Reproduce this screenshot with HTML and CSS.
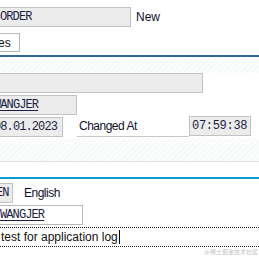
FILE: index.html
```html
<!DOCTYPE html>
<html>
<head>
    <meta charset="UTF-8">
    <title>Log Header</title>
    <link rel="stylesheet" href="styles.css">
</head>
<body>
    <div class="screen">
        <div class="row r1">
            <span class="fld gray f-order">ORDER</span>
            <span class="lbl lbl-new">New</span>
        </div>
        <div class="row r2">
            <span class="fld white f-es">es</span>
        </div>

        <div class="rule dark"></div>
        <div class="hatch h1"></div>

        <div class="row r3">
            <span class="fld gray f-long"></span>
        </div>
        <div class="row r4">
            <span class="fld gray f-user"><u>WANGJER</u></span>
        </div>
        <div class="row r5">
            <span class="fld gray f-date">08.01.2023</span>
            <span class="lbl lbl-changed">Changed At</span>
            <span class="fld gray f-time">07:59:38</span>
        </div>

        <div class="hatch h2"></div>
        <div class="sep"></div>
        <div class="rule light"></div>

        <div class="row r6">
            <span class="fld gray f-lang">EN</span>
            <span class="lbl lbl-lang">English</span>
        </div>
        <div class="row r7">
            <span class="fld white f-user2"><u>WANGJER</u></span>
        </div>
        <div class="row r8">
            <span class="edit">test for application log<span class="caret"></span></span>
        </div>
    </div>
    <div class="watermark">@稀土掘金技术社区</div>
</body>
</html>
```

FILE: styles.css
```css
* {
    margin: 0;
    padding: 0;
    box-sizing: border-box;
}

body {
    background: #fff;
    font-family: 'Liberation Sans', Arial, sans-serif;
    color: #111;
    overflow: hidden;
}

.screen {
    display: flex;
    flex-direction: column;
    width: 259px;
    height: 259px;
}

.row {
    display: flex;
    align-items: center;
    height: 20px;
}

.fld {
    display: flex;
    align-items: center;
    flex-shrink: 0;
    height: 20px;
    font-family: 'Liberation Mono', 'Courier New', monospace;
    font-size: 12px;
    letter-spacing: -0.9px;
    color: #1c1c44;
    white-space: nowrap;
    padding-left: 2px;
}

.fld u {
    text-decoration-thickness: 1px;
    text-underline-offset: 2px;
}

.gray {
    background: #ececec;
    border: 1px solid #c2c2c2;
}

.white {
    background: #fff;
    border: 1px solid #b8b8b8;
}

.lbl {
    font-size: 12px;
    letter-spacing: -0.5px;
    color: #10102a;
    white-space: nowrap;
}

/* header block */
.r1 { margin-top: 7px; }
.f-order { margin-left: -4px; width: 135px; padding-left: 3px; }
.lbl-new { margin-left: 5px; letter-spacing: 0; }

.r2 { margin-top: 6px; height: 19px; }
.f-es {
    margin-left: -6px;
    width: 26px;
    height: 19px;
    padding-left: 3px;
    font-family: 'Liberation Sans', Arial, sans-serif;
    font-size: 12px;
    letter-spacing: 0;
    color: #111;
}

.rule { height: 2px; }
.rule.dark { margin-top: 3px; background: #2d6a97; }
.rule.light { background: #0d9ad6; }

.hatch {
    background: repeating-linear-gradient(135deg, #f7f9fa 0 2px, #fdfefe 2px 4px);
}
.h1 { height: 16px; }
.h2 { height: 23px; }

.sep {
    height: 16px;
    border-top: 1px solid #dedede;
}

/* created block */
.f-long { margin-left: -2px; width: 205px; }

.r4 { margin-top: 2px; }
.f-user { margin-left: -9px; width: 86px; }

.r5 {
    margin-top: 1px;
    height: 22px;
    align-items: flex-start;
}
.f-date { margin-top: 1px; margin-left: -10px; width: 73px; padding-left: 3px; }
.lbl-changed {
    margin-left: 14px;
    width: 112px;
    height: 21px;
    padding: 3px 0 0 2px;
    border-bottom: 1px solid #c8c8c8;
}
.f-time {
    width: 62px;
    padding-left: 2px;
    letter-spacing: -0.3px;
}

/* language block */
.r6 { margin-top: 4px; }
.f-lang { margin-left: -6px; width: 19px; padding-left: 1px; }
.lbl-lang { margin-left: 11px; }

.r7 { margin-top: 2px; }
.f-user2 { margin-left: -3px; width: 86px; }

.r8 { margin-top: 2px; }
.edit {
    display: flex;
    align-items: center;
    width: 100%;
    height: 20px;
    padding-left: 1px;
    border-top: 1px dotted #222;
    border-bottom: 1px dotted #222;
    font-size: 12px;
    color: #111;
}

.caret {
    display: inline-block;
    width: 1px;
    height: 14px;
    margin-left: 1px;
    background: #000;
}

.watermark {
    position: absolute;
    right: 1px;
    bottom: 3px;
    font-family: 'Noto Sans CJK SC', sans-serif;
    font-size: 6px;
    color: #c4c4c4;
}
```
